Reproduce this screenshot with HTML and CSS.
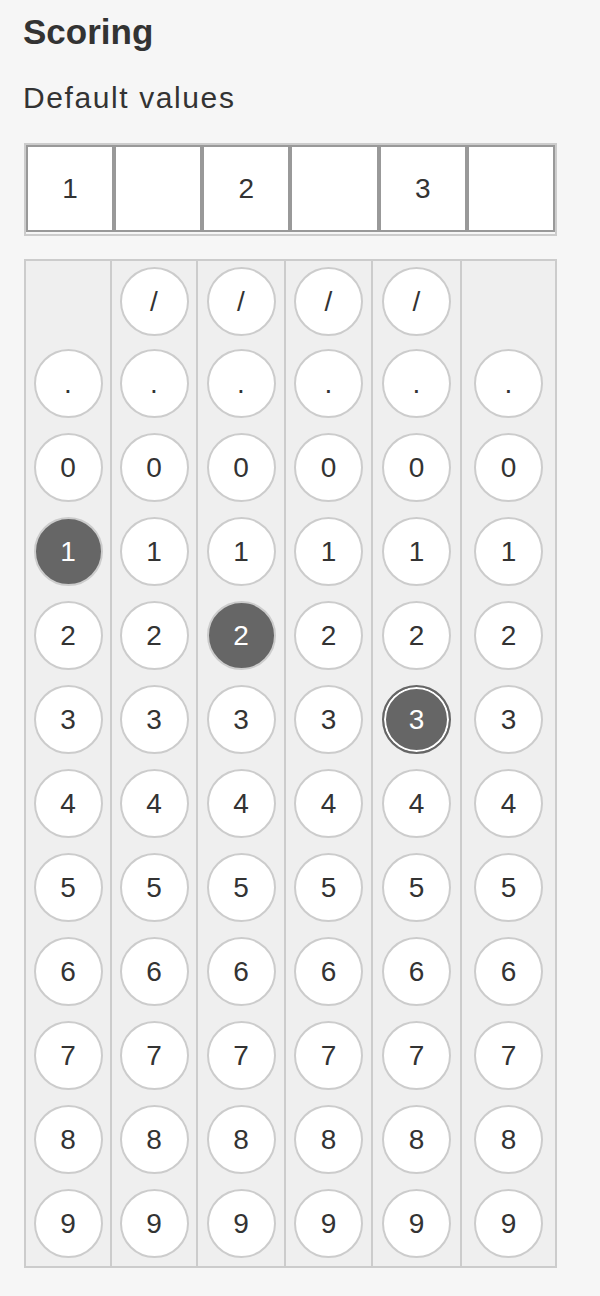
FILE: index.html
```html
<!DOCTYPE html>
<html lang="en">
  <head>
    <meta charset="UTF-8" />
    <meta name="viewport" content="width=device-width, initial-scale=1.0" />
    <title>Scoring</title>
    <link rel="stylesheet" href="styles.css">
  </head>
  <body>
    <div class="page">
      <h2 class="title">Scoring</h2>
      <div class="label">Default values</div>

      <!-- Seçilen değerler -->
      <div class="answer-row">
        <div class="answer-cell">1</div>
        <div class="answer-cell"></div>
        <div class="answer-cell">2</div>
        <div class="answer-cell"></div>
        <div class="answer-cell">3</div>
        <div class="answer-cell"></div>
      </div>

      <!-- Balon ızgarası -->
      <div class="bubble-grid" id="bubbleGrid"></div>
    </div>

    <script>
      const grid = document.getElementById("bubbleGrid");
      const values = [".", "0", "1", "2", "3", "4", "5", "6", "7", "8", "9"];
      const selected = { 0: "1", 2: "2", 4: "3" };
      const focused = 4;

      for (let col = 0; col < 6; col++) {
        const column = document.createElement("div");
        column.classList.add("bubble-col");

        const slash = document.createElement("div");
        slash.classList.add("bubble", "slash");
        if (col === 0 || col === 5) {
          slash.classList.add("empty");
        } else {
          slash.textContent = "/";
        }
        column.appendChild(slash);

        values.forEach(function (v) {
          const b = document.createElement("div");
          b.classList.add("bubble");
          b.textContent = v;
          if (selected[col] === v) {
            b.classList.add("filled");
            if (col === focused) b.classList.add("focus");
          }
          column.appendChild(b);
        });

        grid.appendChild(column);
      }
    </script>
  </body>
</html>
```

FILE: styles.css
```css
/* Genel Stil */
body {
  font-family: "Liberation Sans", Arial, sans-serif;
  margin: 0;
  padding: 0;
  background-color: #f6f6f6;
  color: #333;
}

.page {
  padding: 12px 24px 30px 24px;
}

.title {
  margin: 0 0 0 -1px;
  font-size: 35px;
  line-height: 40px;
  font-weight: bold;
}

.label {
  margin: 28px 0 0 -1px;
  font-size: 30px;
  line-height: 36px;
  letter-spacing: 1.6px;
}

/* Üst tablo */
.answer-row {
  width: 533px;
  box-sizing: border-box;
  margin-top: 27px;
  border: 2px solid #ccc;
  padding-bottom: 2px;
  display: grid;
  grid-template-columns: repeat(6, 1fr);
}

.answer-cell {
  height: 87px;
  box-sizing: border-box;
  border: 2px solid #999;
  background-color: #fff;
  display: flex;
  align-items: center;
  justify-content: center;
  font-size: 28px;
}

/* Balonlar */
.bubble-grid {
  width: 533px;
  box-sizing: border-box;
  margin-top: 23px;
  border: 2px solid #ccc;
  display: grid;
  grid-template-columns: 84px 84px 86px 85px 87px 93px;
  column-gap: 2px;
  background-color: #ccc;
}

.bubble-col {
  background-color: #efefef;
  padding: 6px 0 8px 0;
  display: flex;
  flex-direction: column;
  align-items: center;
  gap: 15px;
}

.bubble {
  width: 69px;
  height: 69px;
  box-sizing: border-box;
  border: 2px solid #ccc;
  border-radius: 50%;
  background-color: #fff;
  display: flex;
  align-items: center;
  justify-content: center;
  font-size: 28px;
  color: #333;
}

.bubble.slash {
  margin-bottom: -2px;
}

.bubble.empty {
  visibility: hidden;
}

.bubble.filled {
  background-color: #666;
  color: #fff;
}

.bubble.focus {
  border-color: #666;
  box-shadow: inset 0 0 0 2px #fff;
}
```
